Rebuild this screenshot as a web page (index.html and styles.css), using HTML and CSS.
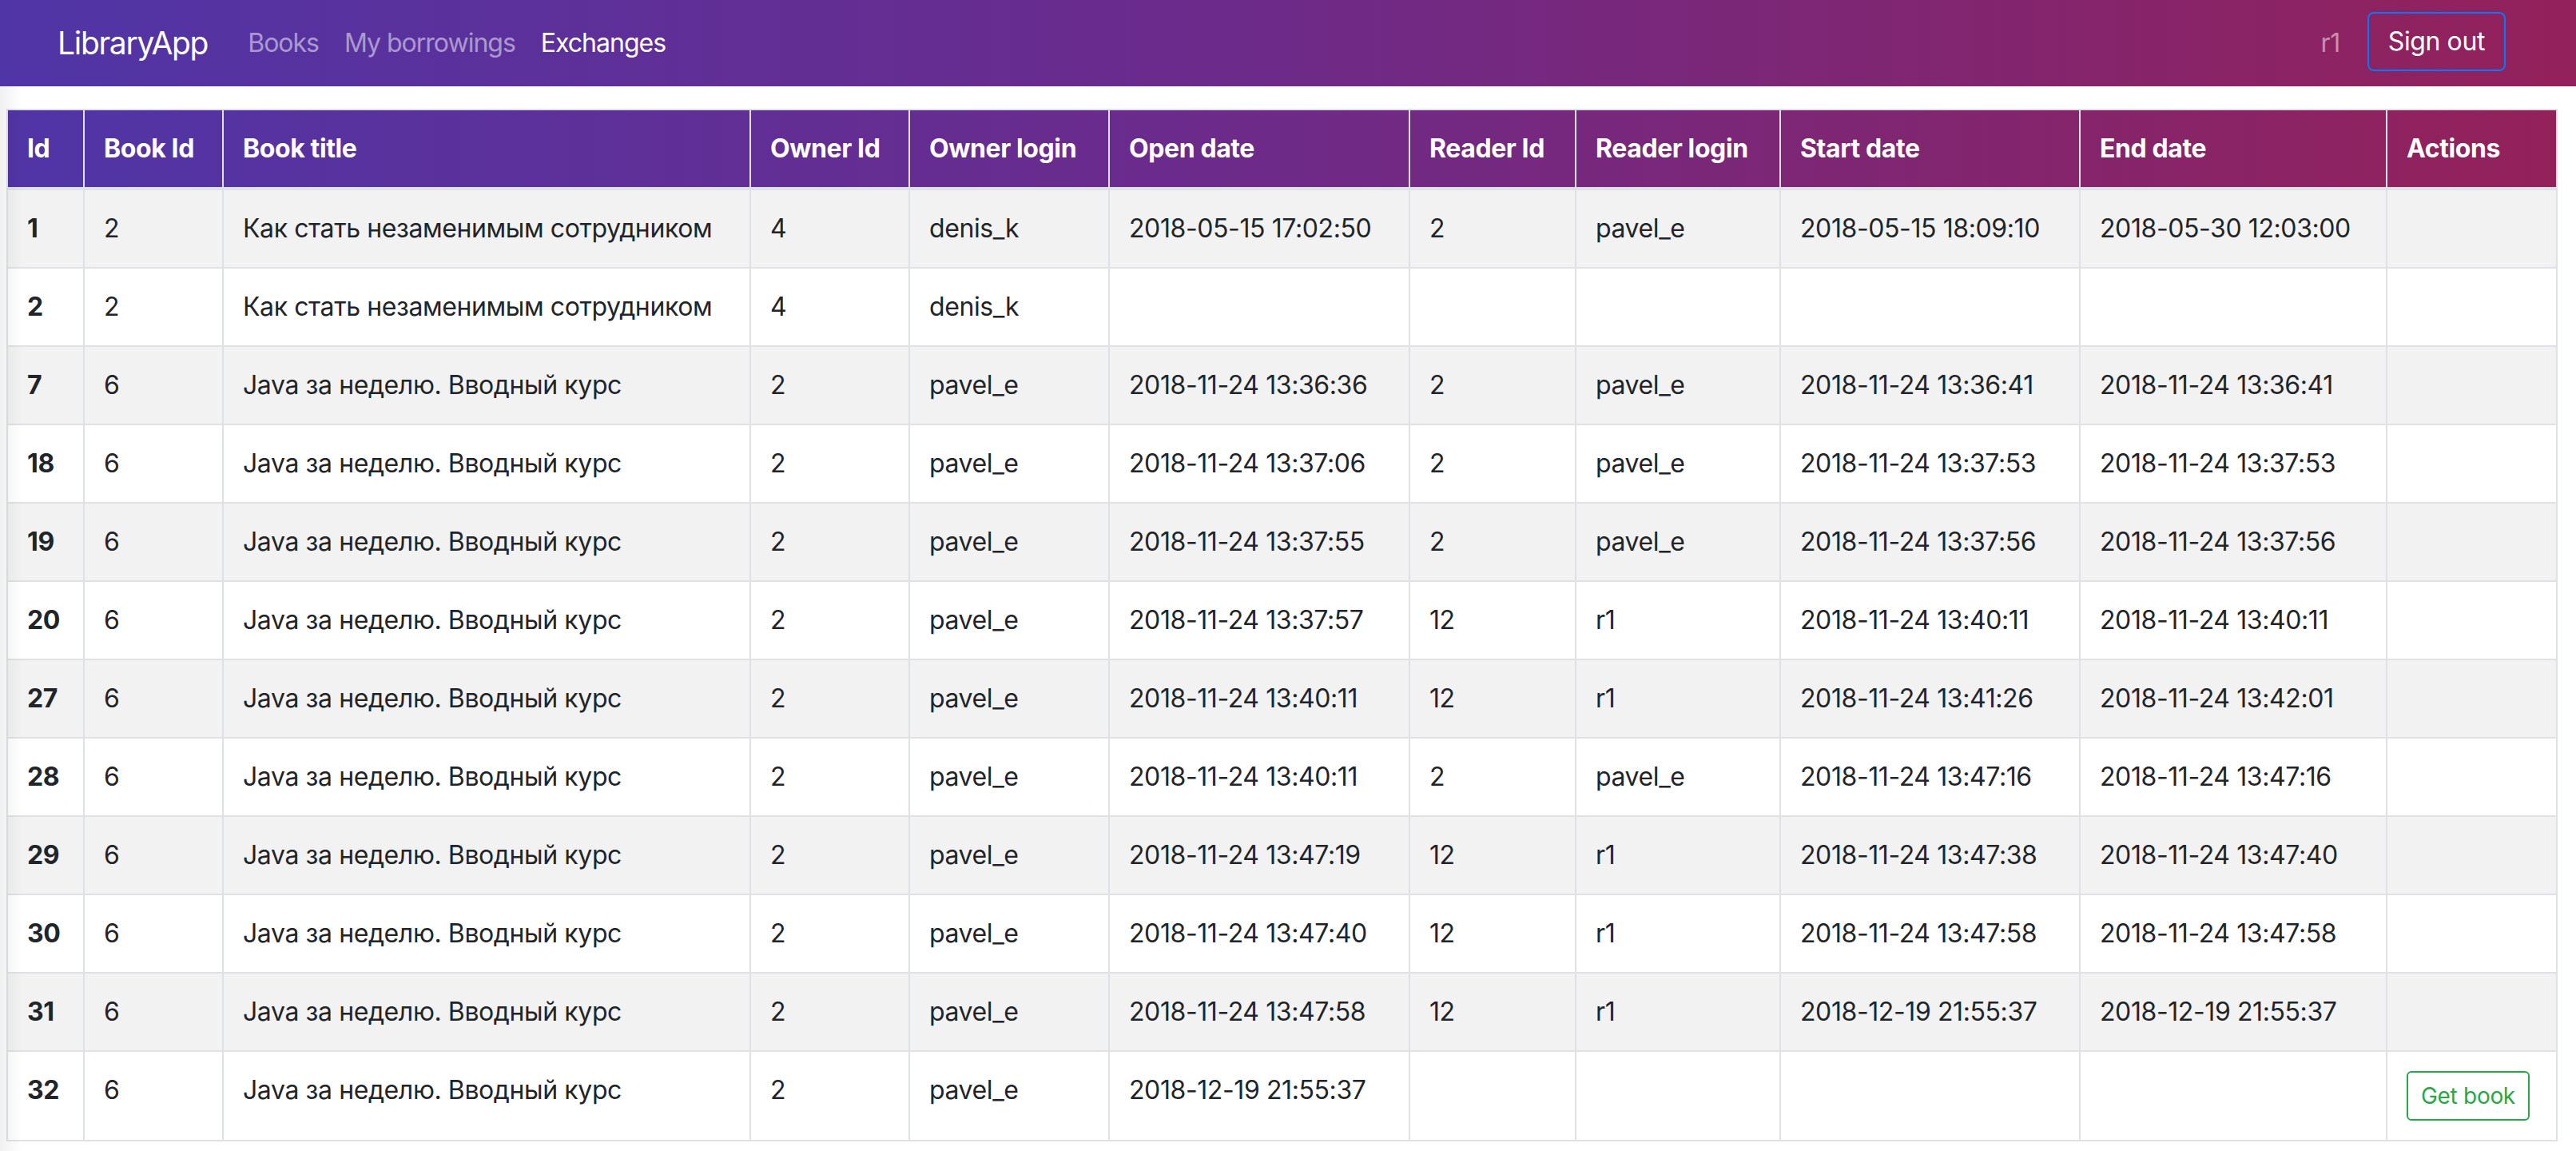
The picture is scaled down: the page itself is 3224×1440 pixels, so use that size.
FILE: index.html
```html
<!DOCTYPE html>
<html lang="ru">
<head>
<meta charset="utf-8">
<title>LibraryApp</title>
<link rel="stylesheet" href="styles.css">
</head>
<body>
<nav class="navbar">
  <a class="brand" href="#">LibraryApp</a>
  <ul class="nav">
    <li><a class="nav-link" href="#">Books</a></li>
    <li><a class="nav-link" href="#">My borrowings</a></li>
    <li><a class="nav-link active" href="#">Exchanges</a></li>
  </ul>
  <div class="nav-right">
    <span class="user">r1</span>
    <button class="btn-signout" type="button">Sign out</button>
  </div>
</nav>
<main class="main">
  <table class="table">
    <colgroup>
      <col class="c-id"><col class="c-book"><col class="c-title"><col class="c-owner"><col class="c-ologin"><col class="c-open"><col class="c-reader"><col class="c-rlogin"><col class="c-start"><col class="c-end"><col class="c-actions">
    </colgroup>
    <thead>
      <tr><th>Id</th><th>Book Id</th><th>Book title</th><th>Owner Id</th><th>Owner login</th><th>Open date</th><th>Reader Id</th><th>Reader login</th><th>Start date</th><th>End date</th><th>Actions</th></tr>
    </thead>
    <tbody>
      <tr><th>1</th><td>2</td><td>Как стать незаменимым сотрудником</td><td>4</td><td>denis_k</td><td>2018-05-15 17:02:50</td><td>2</td><td>pavel_e</td><td>2018-05-15 18:09:10</td><td>2018-05-30 12:03:00</td><td></td></tr>
      <tr><th>2</th><td>2</td><td>Как стать незаменимым сотрудником</td><td>4</td><td>denis_k</td><td></td><td></td><td></td><td></td><td></td><td></td></tr>
      <tr><th>7</th><td>6</td><td>Java за неделю. Вводный курс</td><td>2</td><td>pavel_e</td><td>2018-11-24 13:36:36</td><td>2</td><td>pavel_e</td><td>2018-11-24 13:36:41</td><td>2018-11-24 13:36:41</td><td></td></tr>
      <tr><th>18</th><td>6</td><td>Java за неделю. Вводный курс</td><td>2</td><td>pavel_e</td><td>2018-11-24 13:37:06</td><td>2</td><td>pavel_e</td><td>2018-11-24 13:37:53</td><td>2018-11-24 13:37:53</td><td></td></tr>
      <tr><th>19</th><td>6</td><td>Java за неделю. Вводный курс</td><td>2</td><td>pavel_e</td><td>2018-11-24 13:37:55</td><td>2</td><td>pavel_e</td><td>2018-11-24 13:37:56</td><td>2018-11-24 13:37:56</td><td></td></tr>
      <tr><th>20</th><td>6</td><td>Java за неделю. Вводный курс</td><td>2</td><td>pavel_e</td><td>2018-11-24 13:37:57</td><td>12</td><td>r1</td><td>2018-11-24 13:40:11</td><td>2018-11-24 13:40:11</td><td></td></tr>
      <tr><th>27</th><td>6</td><td>Java за неделю. Вводный курс</td><td>2</td><td>pavel_e</td><td>2018-11-24 13:40:11</td><td>12</td><td>r1</td><td>2018-11-24 13:41:26</td><td>2018-11-24 13:42:01</td><td></td></tr>
      <tr><th>28</th><td>6</td><td>Java за неделю. Вводный курс</td><td>2</td><td>pavel_e</td><td>2018-11-24 13:40:11</td><td>2</td><td>pavel_e</td><td>2018-11-24 13:47:16</td><td>2018-11-24 13:47:16</td><td></td></tr>
      <tr><th>29</th><td>6</td><td>Java за неделю. Вводный курс</td><td>2</td><td>pavel_e</td><td>2018-11-24 13:47:19</td><td>12</td><td>r1</td><td>2018-11-24 13:47:38</td><td>2018-11-24 13:47:40</td><td></td></tr>
      <tr><th>30</th><td>6</td><td>Java за неделю. Вводный курс</td><td>2</td><td>pavel_e</td><td>2018-11-24 13:47:40</td><td>12</td><td>r1</td><td>2018-11-24 13:47:58</td><td>2018-11-24 13:47:58</td><td></td></tr>
      <tr><th>31</th><td>6</td><td>Java за неделю. Вводный курс</td><td>2</td><td>pavel_e</td><td>2018-11-24 13:47:58</td><td>12</td><td>r1</td><td>2018-12-19 21:55:37</td><td>2018-12-19 21:55:37</td><td></td></tr>
      <tr><th>32</th><td>6</td><td>Java за неделю. Вводный курс</td><td>2</td><td>pavel_e</td><td>2018-12-19 21:55:37</td><td></td><td></td><td></td><td></td><td><button class="btn-get" type="button">Get book</button></td></tr>
    </tbody>
  </table>
</main>
</body>
</html>
```

FILE: styles.css
```css
* { box-sizing: border-box; }

html, body {
  margin: 0;
  padding: 0;
  background: #fff;
}

body {
  font-family: Inter, "Noto Sans", "Liberation Sans", sans-serif;
  font-size: 32px;
  line-height: 48px;
  color: #212529;
  letter-spacing: -0.4px;
}

.navbar {
  display: flex;
  align-items: center;
  height: 108px;
  padding: 0 88px 0 72px;
  background: linear-gradient(to right, #5035a6 0%, #6a2b8c 45%, #93215a 100%);
}

.brand {
  font-size: 39px;
  line-height: 60px;
  letter-spacing: -1.3px;
  color: #fff;
  text-decoration: none;
  margin-right: 34px;
}

.nav {
  display: flex;
  list-style: none;
  margin: 0;
  padding: 0;
}

.nav-link {
  display: block;
  padding: 0 16px;
  letter-spacing: -1px;
  color: rgba(255, 255, 255, 0.5);
  text-decoration: none;
}

.nav-link.active { color: #fff; }

.nav-right {
  margin-left: auto;
  display: flex;
  align-items: center;
  gap: 34px;
}

.user { color: rgba(255, 255, 255, 0.5); }

.btn-signout {
  font: inherit;
  letter-spacing: inherit;
  color: #fff;
  background: transparent;
  border: 2px solid #007bff;
  border-radius: 8px;
  padding: 11px 24px;
  line-height: 48px;
  margin-top: -4px;
}

.main {
  position: relative;
  padding: 28px 0 40px 8px;
}

.main::before {
  content: "";
  position: absolute;
  left: 0;
  top: 0;
  bottom: 0;
  width: 28px;
  background: linear-gradient(to right, rgba(0, 0, 0, 0.055), rgba(0, 0, 0, 0));
  pointer-events: none;
  z-index: 2;
}

.table {
  width: 3193px;
  table-layout: fixed;
  border-collapse: collapse;
  border: 2px solid #dee2e6;
  background: linear-gradient(to right, #5035a6 0%, #6a2b8c 45%, #93215a 100%) top left / 100% 102px no-repeat;
}

.c-id { width: 96px; }
.c-book { width: 174px; }
.c-title { width: 660px; }
.c-owner { width: 199px; }
.c-ologin { width: 250px; }
.c-open { width: 376px; }
.c-reader { width: 208px; }
.c-rlogin { width: 256px; }
.c-start { width: 375px; }
.c-end { width: 384px; }
.c-actions { width: 213px; }

.table th,
.table td {
  padding: 24px;
  border: 2px solid #dee2e6;
  vertical-align: top;
  text-align: left;
  white-space: nowrap;
}

.table thead th {
  color: #fff;
  font-weight: 700;
  vertical-align: bottom;
  border-bottom-width: 4px;
}

.table tbody th { font-weight: 700; }

.table tbody tr { background: #fff; }

.table tbody tr:nth-of-type(odd) { background: #f2f2f2; }

.btn-get {
  font-family: inherit;
  font-size: 28px;
  line-height: 42px;
  letter-spacing: -0.3px;
  color: #28a745;
  background: transparent;
  border: 2px solid #28a745;
  border-radius: 6px;
  padding: 8px 16px;
}
```
